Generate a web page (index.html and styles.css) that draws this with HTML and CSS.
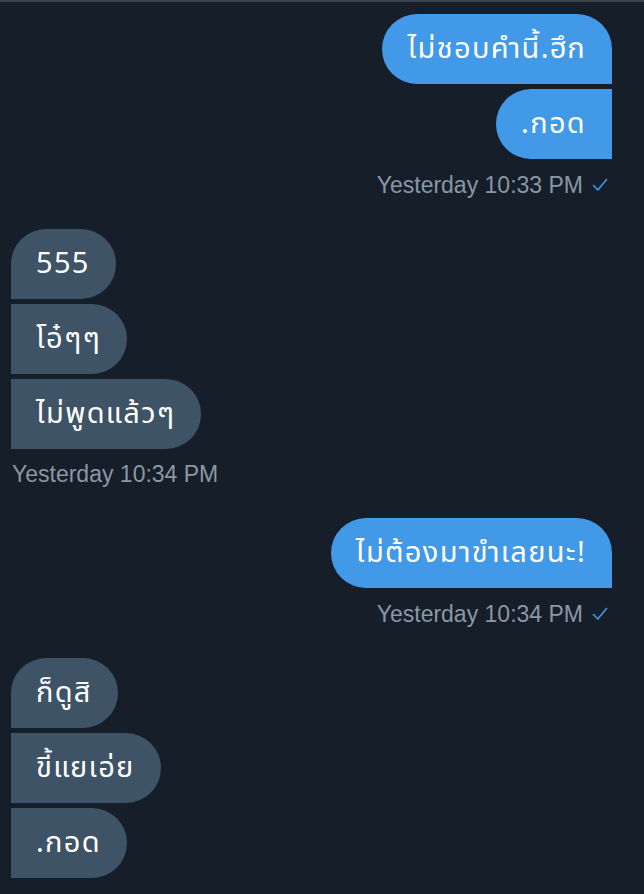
FILE: index.html
```html
<!DOCTYPE html>
<html lang="th">
<head>
<meta charset="utf-8">
<link rel="stylesheet" href="styles.css">
</head>
<body>
<div class="chat">
  <div class="group out">
    <div class="bubble first">ไม่ชอบคำนี้.ฮึก</div>
    <div class="bubble">.กอด</div>
    <div class="stamp">Yesterday 10:33 PM <svg class="check" viewBox="0 0 16 14" width="16" height="14"><path d="M1.5 7.5 L5.8 12 L14.5 1.5" fill="none" stroke="currentColor" stroke-width="1.6" stroke-linecap="round" stroke-linejoin="round"/></svg></div>
  </div>
  <div class="group in">
    <div class="bubble first">555</div>
    <div class="bubble">โอ๋ๆๆ</div>
    <div class="bubble">ไม่พูดแล้วๆ</div>
    <div class="stamp">Yesterday 10:34 PM</div>
  </div>
  <div class="group out">
    <div class="bubble first">ไม่ต้องมาขำเลยนะ!</div>
    <div class="stamp">Yesterday 10:34 PM <svg class="check" viewBox="0 0 16 14" width="16" height="14"><path d="M1.5 7.5 L5.8 12 L14.5 1.5" fill="none" stroke="currentColor" stroke-width="1.6" stroke-linecap="round" stroke-linejoin="round"/></svg></div>
  </div>
  <div class="group in">
    <div class="bubble first">ก็ดูสิ</div>
    <div class="bubble">ขี้แยเอ่ย</div>
    <div class="bubble">.กอด</div>
  </div>
</div>
</body>
</html>
```

FILE: styles.css
```css
html, body {
  margin: 0;
  padding: 0;
  background: #161e29;
}
body {
  border-top: 2px solid #3b414b;
  min-height: 892px;
  box-sizing: border-box;
  font-family: "Noto Sans Thai", "Noto Sans", "Liberation Sans", sans-serif;
}
.chat {
  display: flex;
  flex-direction: column;
  gap: 32px;
  padding: 12px 32px 0 11px;
}
.group {
  display: flex;
  flex-direction: column;
  gap: 5px;
}
.group.out { align-items: flex-end; }
.group.in { align-items: flex-start; }
.bubble {
  height: 70px;
  box-sizing: border-box;
  padding: 0 26px 0 25px;
  display: flex;
  align-items: center;
  font-size: 29px;
  letter-spacing: 1.3px;
  color: #ffffff;
  white-space: nowrap;
}
.out .bubble {
  background: #4299e8;
  border-radius: 35px 0 0 35px;
}
.out .bubble.first { border-radius: 35px 35px 0 35px; }
.in .bubble {
  background: #3e5366;
  border-radius: 0 35px 35px 0;
}
.in .bubble.first { border-radius: 35px 35px 35px 0; }
.stamp {
  margin-top: 9px;
  height: 24px;
  display: flex;
  align-items: center;
  gap: 9px;
  line-height: 24px;
  font-family: "Liberation Sans", sans-serif;
  font-size: 23px;
  color: #8a97a4;
}
.out .stamp { padding-right: 4px; }
.in .stamp { padding-left: 1px; margin-top: 8px; }
.check { color: #4299e8; display: block; }
```
